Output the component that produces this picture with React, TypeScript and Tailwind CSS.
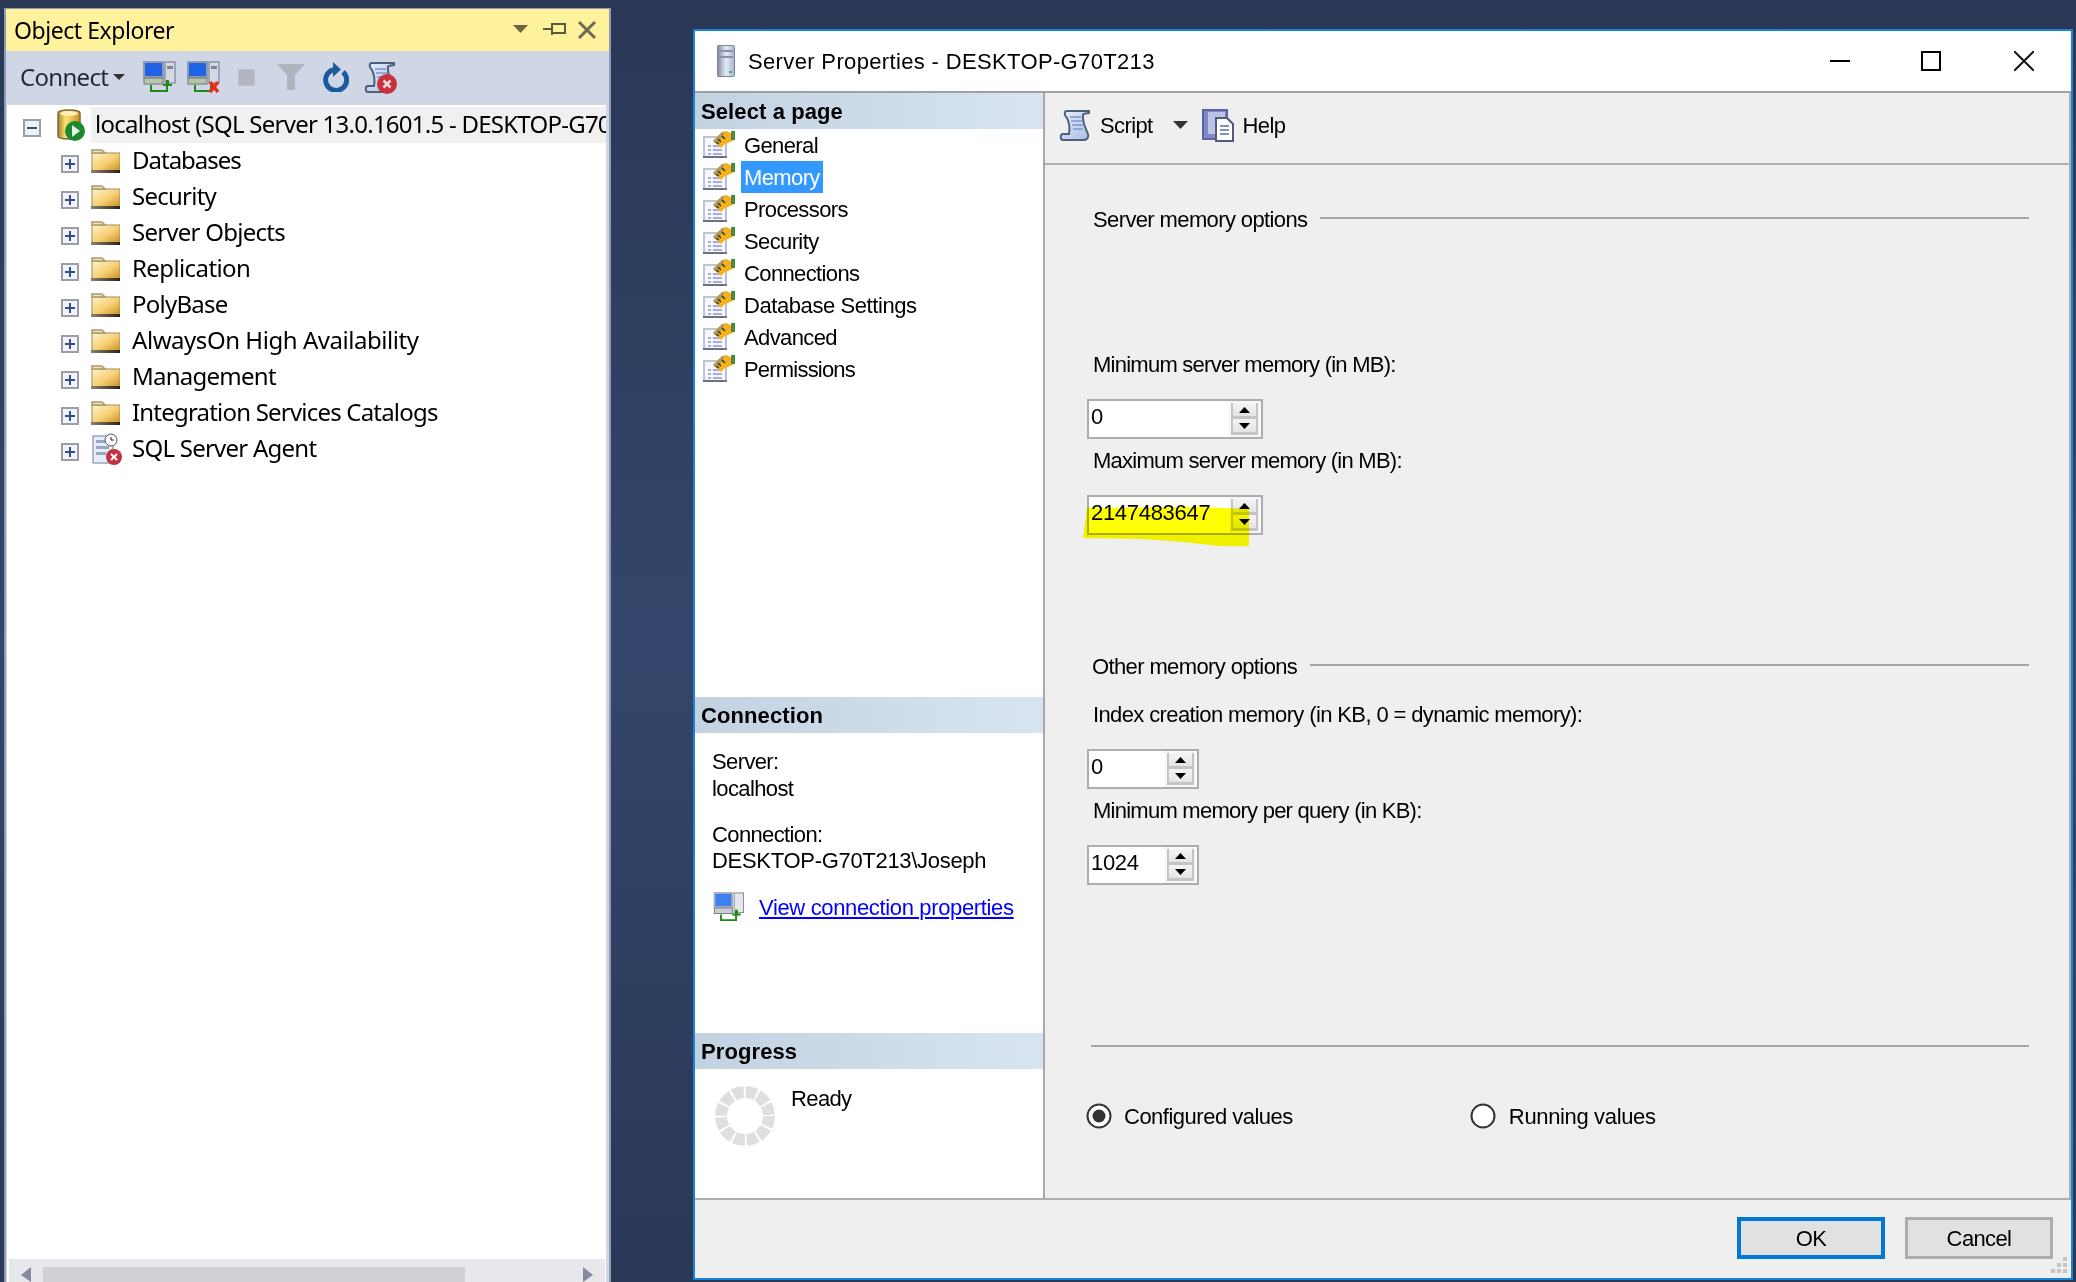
import React from "react";

const Plus = ({ minus = false }: { minus?: boolean }) => (
  <svg width="18" height="18" viewBox="0 0 18 18" className="mt-[6px] shrink-0">
    <rect x="1" y="1" width="16" height="16" fill="#f1f3f7" stroke="#9a9da6" strokeWidth="2" />
    <rect x="4" y="8" width="10" height="2" fill="#34508c" />
    {!minus && <rect x="8" y="4" width="2" height="10" fill="#34508c" />}
  </svg>
);

const Folder = () => (
  <svg width="29" height="24" viewBox="0 0 29 24" className="shrink-0">
    <defs>
      <linearGradient id="fold" x1="0" y1="0" x2="1" y2="1">
        <stop offset="0" stopColor="#fff3c8" />
        <stop offset="0.55" stopColor="#f6cf73" />
        <stop offset="1" stopColor="#c98d1e" />
      </linearGradient>
      <linearGradient id="foldb" x1="0" y1="0" x2="1" y2="0">
        <stop offset="0" stopColor="#8a8270" />
        <stop offset="1" stopColor="#2a2414" />
      </linearGradient>
    </defs>
    <path d="M1 4h28v18H1z" fill="url(#fold)" stroke="#a08a50" strokeWidth="1" />
    <path d="M1 1h10l3 3H1z" fill="#efe2b4" stroke="#a89a70" strokeWidth="1.500" />
    <rect x="0" y="21" width="29" height="3" fill="url(#foldb)" />
  </svg>
);

const DbIcon = () => (
  <svg width="28" height="32" viewBox="0 0 28 32" className="shrink-0">
    <defs>
      <linearGradient id="dbg" x1="0" y1="0" x2="1" y2="0">
        <stop offset="0" stopColor="#a88420" />
        <stop offset="0.35" stopColor="#ffe27a" />
        <stop offset="1" stopColor="#c88f1a" />
      </linearGradient>
    </defs>
    <path d="M1 4c0-4 22-4 22 0v23c0 4-22 4-22 0z" fill="url(#dbg)" stroke="#7c6a3a" strokeWidth="1.500" />
    <ellipse cx="12" cy="4.500" rx="9" ry="2.500" fill="#ffeeb0" />
    <circle cx="18" cy="22" r="10" fill="#1c8a2c" />
    <path d="M15 16l8 6-8 6z" fill="#e8f4e6" />
  </svg>
);

const AgentIcon = () => (
  <svg width="32" height="32" viewBox="0 0 32 32" className="shrink-0">
    <rect x="2" y="3" width="20" height="27" fill="#e8eef8" stroke="#6d7f9c" />
    <rect x="5" y="7" width="11" height="3" fill="#93a9cc" />
    <rect x="5" y="13" width="13" height="3" fill="#93a9cc" />
    <rect x="5" y="19" width="10" height="3" fill="#93a9cc" />
    <circle cx="20" cy="7" r="6" fill="#fff" stroke="#555" />
    <path d="M20 4v3h3" stroke="#222" fill="none" />
    <circle cx="23" cy="24" r="8" fill="#c3303f" />
    <path d="M20 21l6 6M26 21l-6 6" stroke="#fff" strokeWidth="2" />
  </svg>
);

const ConnectIcon = ({ mode }: { mode: "ok" | "x" }) => (
  <svg width="33" height="32" viewBox="0 0 33 32" className="shrink-0">
    <rect x="1" y="1" width="19" height="15" fill="#1f62e6" stroke="#8e9ab0" strokeWidth="2" />
    <rect x="1" y="17" width="19" height="6" fill="#b9c6a4" stroke="#6d7586" />
    <rect x="22" y="1" width="10" height="21" fill="#d4d9e4" stroke="#6d7586" />
    <rect x="24" y="5" width="6" height="3" fill="#7b8598" />
    <path d="M8 24v6h16v-8" fill="none" stroke="#1d8a14" strokeWidth="2" />
    {mode === "ok" ? (
      <path d="M20 25h9v-2h-3v-4h-3v4h-3z" fill="#1d8a14" />
    ) : (
      <path d="M23 21l8 10M31 21l-8 10" stroke="#ec2a18" strokeWidth="3.500" />
    )}
  </svg>
);

const ScrollIcon = ({ stop = false }: { stop?: boolean }) => (
  <svg width="33" height="33" viewBox="0 0 33 33" className="shrink-0">
    <defs>
      <linearGradient id="scr" x1="0" y1="0" x2="1" y2="1">
        <stop offset="0" stopColor="#eaf0fb" />
        <stop offset="1" stopColor="#a9bde6" />
      </linearGradient>
    </defs>
    <path d="M8 2c-3 0-3 4 0 7 2 4 3 10 2 16H4c-3 0-3 6 0 6h21c3 0 5-3 4-6-2-5-6-12-5-19 0-2 3-1 6-2V2z" fill="url(#scr)" stroke="#4f6078" strokeWidth="2" />
    <path d="M11 8h11M12 12h11M13 16h11M14 20h10" stroke="#8ea6d8" strokeWidth="2" />
    {stop && <circle cx="23" cy="23" r="10" fill="#c9313f" />}
    {stop && <path d="M19.500 19.500l7 7M26.500 19.500l-7 7" stroke="#f4d8da" strokeWidth="2.500" />}
  </svg>
);

const PageIcon = () => (
  <svg width="32" height="28" viewBox="0 0 32 28" className="shrink-0">
    <rect x="1" y="6" width="22" height="20" fill="#f7f8ff" stroke="#bcc3df" strokeWidth="2" />
    <rect x="0" y="25" width="24" height="2" fill="#70717c" />
    <path d="M5 15h3M10 15h9M5 19h3M10 19h9M5 23h3M10 23h9" stroke="#8896da" strokeWidth="1.500" />
    <path d="M10 10L19 1l5-1 8 5-2 5-8 3-4 4z" fill="#f7b21e" />
    <path d="M10 10L19 1l3 1-8 11z" fill="#b9975a" />
    <path d="M15 8l3 3M13 11l3 2M19 5l3 3" stroke="#3d3418" strokeWidth="1.500" />
    <rect x="28" y="0" width="4" height="9" fill="#4d8a3f" />
  </svg>
);

const HelpIcon = () => (
  <svg width="32" height="33" viewBox="0 0 32 33" className="shrink-0">
    <rect x="1" y="1" width="24" height="29" fill="#8089c6" stroke="#5b63a5" strokeWidth="2" />
    <rect x="6" y="3" width="17" height="22" fill="#bcc3e6" />
    <path d="M14 9h11l6 6v17H14z" fill="#fff" stroke="#4f5d78" strokeWidth="2" />
    <path d="M18 17h9M18 21h9M18 25h9" stroke="#7f93b5" strokeWidth="2" />
  </svg>
);

const Tri = ({ down = false, className = "" }: { down?: boolean; className?: string }) => (
  <svg width="11" height="6" viewBox="0 0 11 6" className={className}>
    <path d={down ? "M0 0h11L5.500 6z" : "M0 6h11L5.500 0z"} fill="#000" />
  </svg>
);

const Spin = ({ value, wide }: { value: string; wide: boolean }) => (
  <div className={`flex h-[40px] border-2 border-[#adadad] bg-white ${wide ? "w-[176px]" : "w-[112px]"}`}>
    <div className="flex-1 pl-[2px] text-[22px] leading-[31px] tracking-[-0.3px] text-black">{value}</div>
    <div className="flex w-[32px] flex-col bg-[#f7f7f7] pl-[2px] pr-[3px] pt-[2px] pb-[2px]">
      <div className="flex flex-1 items-center justify-center border-x-[2px] border-b-[3px] border-[#c4c4c4] bg-gradient-to-b from-[#f4f4f4] to-[#e4e4e4]">
        <Tri />
      </div>
      <div className="flex flex-1 items-center justify-center border-x-[2px] border-b-[3px] border-[#c4c4c4] bg-gradient-to-b from-[#f4f4f4] to-[#e4e4e4]">
        <Tri down />
      </div>
    </div>
  </div>
);

const SectionHead = ({ label }: { label: string }) => (
  <div className="flex h-[36px] shrink-0 items-center bg-gradient-to-r from-[#c3d2e1] to-[#d8e4f1] pl-[6px] text-[22px] font-bold tracking-[0.1px] text-black">
    {label}
  </div>
);

const Radio = ({ on = false }: { on?: boolean }) => (
  <svg width="26" height="26" viewBox="0 0 26 26" className="shrink-0">
    <circle cx="13" cy="13" r="11.500" fill="#fff" stroke="#333" strokeWidth="2" />
    {on && <circle cx="13" cy="13" r="6.500" fill="#333" />}
  </svg>
);

const treeItems: [string, string][] = [
  ["Databases", "tracking-[-1px]"],
  ["Security", "tracking-[-0.75px]"],
  ["Server Objects", "tracking-[-0.75px]"],
  ["Replication", "tracking-[-0.6px]"],
  ["PolyBase", "tracking-[-0.75px]"],
  ["AlwaysOn High Availability", "tracking-[-0.45px]"],
  ["Management", "tracking-[-0.75px]"],
  ["Integration Services Catalogs", "tracking-[-0.8px]"],
];

const pages: [string, string][] = [
  ["General", ""],
  ["Memory", ""],
  ["Processors", ""],
  ["Security", ""],
  ["Connections", ""],
  ["Database Settings", "tracking-[-0.42px]"],
  ["Advanced", ""],
  ["Permissions", "tracking-[-0.8px]"],
];

export default function App() {
  return (
    <div className="flex h-[1282px] w-[2076px] overflow-hidden bg-gradient-to-b from-[#2a3855] via-[#34466b] to-[#2a3856] font-['Liberation_Sans',sans-serif]">
      {/* Object Explorer */}
      <div className="mt-[8px] ml-[4px] flex h-[1274px] w-[607px] shrink-0 flex-col border-x-2 border-t border-[#8e9ab6] bg-[#cfd6e5] font-['Noto_Sans',sans-serif]">
        <div className="flex h-[42px] shrink-0 items-center bg-[#fff29d] pl-[8px] pr-[12px] text-[23px] tracking-[-0.45px] text-black">
          <span className="flex-1">Object Explorer</span>
          <svg width="84" height="20" viewBox="0 0 84 20" className="shrink-0">
            <path d="M0 5h15l-7.500 8z" fill="#6d6540" />
            <path d="M30 9h9M39 3v12M39 4h13v9H39" fill="none" stroke="#5d5a3e" strokeWidth="2" />
            <path d="M66 2l16 16M82 2L66 18" stroke="#6d6a50" strokeWidth="3" />
          </svg>
        </div>
        <div className="flex h-[52px] shrink-0 items-center pl-[14px] text-[#1e2a3c]">
          <span className="text-[24px] tracking-[-0.7px]">Connect</span>
          <svg width="12" height="6" viewBox="0 0 12 6" className="ml-[5px]">
            <path d="M0 0h12L6 6z" fill="#333" />
          </svg>
          <div className="ml-[18px]">
            <ConnectIcon mode="ok" />
          </div>
          <div className="ml-[11px]">
            <ConnectIcon mode="x" />
          </div>
          <div className="ml-[18px] h-[17px] w-[17px] border border-[#bcc0ca] bg-[#b2b6c0]" />
          <svg width="28" height="26" viewBox="0 0 28 26" className="ml-[22px]">
            <path d="M0 0h28L18 11v15h-8V11z" fill="#b0b4be" />
          </svg>
          <svg width="28" height="30" viewBox="0 0 28 30" className="ml-[17px]">
            <path d="M21 10a10.500 10.500 0 1 1-8-2.500" fill="none" stroke="#1c5a9c" strokeWidth="5" />
            <path d="M11 0v15l8-7.500z" fill="#1c5a9c" />
          </svg>
          <div className="ml-[14px]">
            <ScrollIcon stop />
          </div>
        </div>
        <div className="ml-[1px] mr-[3px] mt-[2px] flex min-h-0 flex-1 flex-col bg-white pt-[2px]">
          <div className="flex h-[36px] shrink-0 items-center pl-[16px] text-[24px] tracking-[-0.75px] text-black">
            <Plus minus />
            <div className="ml-[16px]">
              <DbIcon />
            </div>
            <div className="ml-[6px] h-full min-w-0 flex-1 overflow-hidden whitespace-nowrap bg-[#f0f0f0] pl-[4px] leading-[34px]">
              localhost (SQL Server 13.0.1601.5 - DESKTOP-G70
            </div>
          </div>
          {treeItems.map(([t, tr]) => (
            <div key={t} className="flex h-[36px] shrink-0 items-center pl-[54px] text-[24px] text-black">
              <Plus />
              <div className="ml-[12px]">
                <Folder />
              </div>
              <span className={`mb-[2px] ml-[12px] leading-[34px] ${tr}`}>{t}</span>
            </div>
          ))}
          <div className="flex h-[36px] shrink-0 items-center pl-[54px] text-[24px] tracking-[-0.75px] text-black">
            <Plus />
            <div className="ml-[12px]">
              <AgentIcon />
            </div>
            <span className="mb-[2px] ml-[9px] leading-[34px]">SQL Server Agent</span>
          </div>
          <div className="mt-auto ml-[2px] mr-[1px] flex h-[23px] shrink-0 items-start bg-[#e8e8ec] pt-[8px] pl-[12px]">
            <svg width="10" height="15" viewBox="0 0 10 15" className="shrink-0">
              <path d="M10 0v15L0 8z" fill="#868a9e" />
            </svg>
            <div className="ml-[12px] h-[15px] w-[422px] bg-[#d0d1d7]" />
            <svg width="10" height="15" viewBox="0 0 10 15" className="ml-[118px] shrink-0">
              <path d="M0 0v15L10 8z" fill="#868a9e" />
            </svg>
          </div>
        </div>
      </div>

      {/* Server Properties dialog */}
      <div className="relative mt-[29px] ml-[82px] flex h-[1251px] w-[1380px] shrink-0 flex-col border-2 border-[#1883d7] bg-[#efefef] text-[22px] tracking-[-0.62px] text-black">
        <div className="flex h-[60px] shrink-0 items-center bg-white pl-[22px]">
          <svg width="18" height="32" viewBox="0 0 18 32" className="shrink-0">
            <defs>
              <linearGradient id="srv" x1="0" y1="0" x2="1" y2="0">
                <stop offset="0" stopColor="#7e8aa0" />
                <stop offset="0.5" stopColor="#e6ecf6" />
                <stop offset="1" stopColor="#9fb4d8" />
              </linearGradient>
            </defs>
            <rect x="0.500" y="0.500" width="17" height="31" rx="1" fill="url(#srv)" stroke="#7d8698" />
            <rect x="2" y="5" width="14" height="2" fill="#8a93a6" />
            <rect x="2" y="11" width="14" height="2" fill="#8a93a6" />
            <rect x="12" y="26" width="3" height="2" fill="#4caf50" />
          </svg>
          <span className="ml-[13px] flex-1 tracking-[0.35px]">Server Properties - DESKTOP-G70T213</span>
          <svg width="20" height="4" viewBox="0 0 20 4" className="shrink-0">
            <rect y="1" width="20" height="2" fill="#000" />
          </svg>
          <svg width="20" height="20" viewBox="0 0 20 20" className="ml-[71px] shrink-0">
            <rect x="1" y="1" width="18" height="18" fill="none" stroke="#000" strokeWidth="2" />
          </svg>
          <svg width="20" height="20" viewBox="0 0 20 20" className="ml-[73px] mr-[37px] shrink-0">
            <path d="M0 0l20 20M20 0L0 20" stroke="#111" strokeWidth="2" />
          </svg>
        </div>
        <div className="h-[2px] shrink-0 bg-[#a0a0a0]" />
        <div className="flex h-[1105px] shrink-0">
          {/* left column */}
          <div className="flex w-[350px] shrink-0 flex-col border-r-2 border-[#a8a8a8] bg-white">
            <SectionHead label="Select a page" />
            {pages.map(([p, tr]) => (
              <div key={p} className="flex h-[32px] shrink-0 items-center pl-[8px]">
                <PageIcon />
                <span className={p === "Memory" ? "ml-[6px] flex h-[32px] w-[82px] items-center bg-[#3399ff] pl-[3px] text-white" : `ml-[9px] ${tr}`}>{p}</span>
              </div>
            ))}
            <div className="mt-[312px]">
              <SectionHead label="Connection" />
            </div>
            <div className="mt-[16px] h-[26px] pl-[17px] leading-[26px]">Server:</div>
            <div className="mt-[1px] h-[26px] pl-[17px] leading-[26px]">localhost</div>
            <div className="mt-[20px] h-[26px] pl-[17px] leading-[26px]">Connection:</div>
            <div className="h-[26px] pl-[17px] leading-[26px] tracking-[-0.3px]">DESKTOP-G70T213\Joseph</div>
            <div className="mt-[20px] flex h-[26px] items-center pl-[18px]">
              <svg width="32" height="30" viewBox="0 0 33 32" className="shrink-0">
                <rect x="1" y="1" width="19" height="15" fill="#3f7ff0" stroke="#aab1c0" strokeWidth="2" />
                <rect x="1" y="17" width="19" height="6" fill="#c9cdd6" stroke="#777" />
                <rect x="22" y="1" width="10" height="21" fill="#e4e6ec" stroke="#888" />
                <path d="M8 24v6h16v-8" fill="none" stroke="#1d8a14" strokeWidth="2" />
                <path d="M20 25h9v-2h-3v-4h-3v4h-3z" fill="#1d8a14" />
              </svg>
              <a href="#" className="ml-[14px] tracking-[-0.35px] text-[#0000ff] underline">View connection properties</a>
            </div>
            <div className="mt-[113px]">
              <SectionHead label="Progress" />
            </div>
            <div className="flex items-start pl-[20px] pt-[17px]">
              <svg width="60" height="60" viewBox="0 0 60 60" className="shrink-0">
                <circle cx="30" cy="30" r="24" fill="none" stroke="#dfdfdf" strokeWidth="12" strokeDasharray="10.560 2" />
              </svg>
              <span className="ml-[16px] h-[26px] leading-[26px]">Ready</span>
            </div>
          </div>

          {/* right column */}
          <div className="flex min-w-0 flex-1 flex-col border-r-2 border-[#adadb3]">
            <div className="mt-[2px] flex h-[68px] shrink-0 items-center pb-[8px] pl-[14px]">
              <ScrollIcon />
              <span className="ml-[8px]">Script</span>
              <svg width="15" height="8" viewBox="0 0 15 8" className="ml-[20px]">
                <path d="M0 0h15L7.500 8z" fill="#333" />
              </svg>
              <div className="ml-[14px]">
                <HelpIcon />
              </div>
              <span className="ml-[9px]">Help</span>
            </div>
            <div className="h-[2px] shrink-0 bg-[#adadb3]" />

            <div className="mt-[39px] ml-[48px] mr-[40px] flex h-[30px] items-center">
              <span>Server memory options</span>
              <div className="mb-[2px] ml-[13px] h-[2px] flex-1 bg-[#a5a5a5]" />
            </div>
            <div className="mt-[118px] ml-[48px] h-[26px] leading-[26px] tracking-[-0.75px]">Minimum server memory (in MB):</div>
            <div className="mt-[21px] ml-[42px]">
              <Spin value="0" wide />
            </div>
            <div className="mt-[9px] ml-[48px] h-[26px] leading-[26px] tracking-[-0.75px]">Maximum server memory (in MB):</div>
            <div className="relative mt-[21px] ml-[42px]">
              <Spin value="2147483647" wide />
              <svg width="168" height="40" viewBox="0 0 168 40" className="pointer-events-none absolute top-[11px] left-[-4px] mix-blend-multiply">
                <path d="M4 2l112-1 50 2V40l-30 0-36-4-40-3-60-1z" fill="#ffff00" />
              </svg>
            </div>
            <div className="mt-[116px] ml-[47px] mr-[40px] flex h-[30px] items-center">
              <span>Other memory options</span>
              <div className="mb-[2px] ml-[13px] h-[2px] flex-1 bg-[#a5a5a5]" />
            </div>
            <div className="mt-[21px] ml-[48px] h-[26px] leading-[26px]">Index creation memory (in KB, 0 = dynamic memory):</div>
            <div className="mt-[21px] ml-[42px]">
              <Spin value="0" wide={false} />
            </div>
            <div className="mt-[9px] ml-[48px] h-[26px] leading-[26px] tracking-[-0.75px]">Minimum memory per query (in KB):</div>
            <div className="mt-[21px] ml-[42px]">
              <Spin value="1024" wide={false} />
            </div>
            <div className="mt-[160px] ml-[46px] mr-[40px] h-[2px] bg-[#a5a5a5]" />
            <div className="mt-[54px] ml-[41px] flex h-[30px] items-center">
              <Radio on />
              <span className="ml-[12px] tracking-[-0.5px]">Configured values</span>
              <div className="ml-[177px]">
                <Radio />
              </div>
              <span className="ml-[13px] tracking-[-0.35px]">Running values</span>
            </div>
          </div>
        </div>
        <div className="h-[2px] shrink-0 bg-[#adadad]" />
        <div className="flex flex-1 items-start justify-end gap-[20px] pr-[18px] pt-[17px]">
          <button className="flex h-[42px] w-[148px] items-center justify-center border-4 border-[#0078d7] bg-[#e1e1e1]">OK</button>
          <button className="flex h-[42px] w-[148px] items-center justify-center border-[3px] border-[#adadad] bg-[#e1e1e1]">Cancel</button>
        </div>
        <svg width="16" height="16" viewBox="0 0 16 16" className="absolute right-[4px] bottom-[5px]">
          <path d="M12 0h4v4h-4zM6 6h4v4H6zM12 6h4v4h-4zM0 12h4v4H0zM6 12h4v4H6zM12 12h4v4h-4z" fill="#c4c4c4" />
        </svg>
      </div>
    </div>
  );
}
